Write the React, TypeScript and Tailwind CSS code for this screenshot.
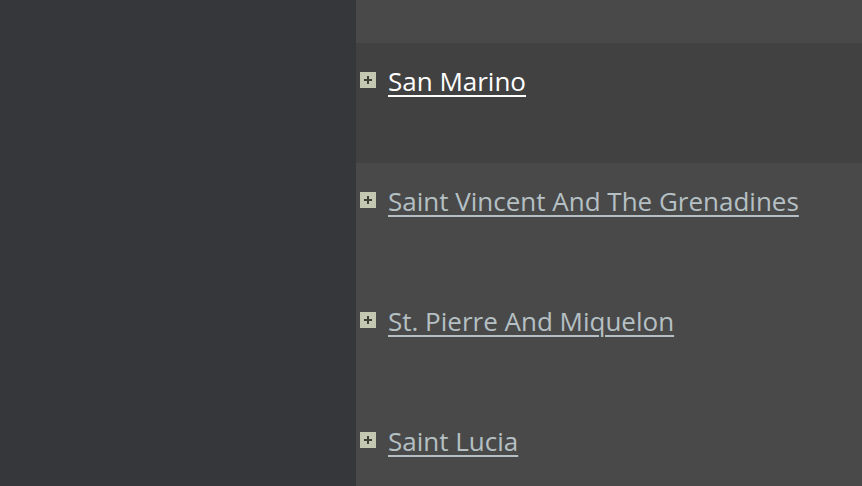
const countries = [
  { name: "San Marino", active: true },
  { name: "Saint Vincent And The Grenadines", active: false },
  { name: "St. Pierre And Miquelon", active: false },
  { name: "Saint Lucia", active: false },
];

const PlusBox = () => (
  <span className="flex h-[16px] w-[16px] shrink-0 items-center justify-center bg-[#c4c8b1]">
    <svg width="12" height="12" viewBox="0 0 12 12">
      <rect x="5" y="2" width="2" height="8" fill="#3f403b" />
      <rect x="2" y="5" width="8" height="2" fill="#3f403b" />
    </svg>
  </span>
);

export default function App() {
  return (
    <div className="flex h-[486px] w-[862px] overflow-hidden bg-[#36373b] font-['Open_Sans',sans-serif]">
      <div className="w-[356px] shrink-0 bg-[#36373b]" />
      <div className="flex flex-1 flex-col bg-[#494949]">
        <div className="h-[43px] shrink-0" />
        {countries.map((c) => (
          <div
            key={c.name}
            className={`flex h-[120px] shrink-0 items-start gap-3 pl-1 pt-[22px] ${c.active ? "bg-[#414141]" : ""}`}
          >
            <div className="pt-[7px]">
              <PlusBox />
            </div>
            <a
              href="#"
              className={`text-[26px] leading-[32px] underline underline-offset-[4px] decoration-2 ${c.active ? "text-white" : "text-[#b5c0c4]"}`}
            >
              {c.name}
            </a>
          </div>
        ))}
      </div>
    </div>
  );
}
